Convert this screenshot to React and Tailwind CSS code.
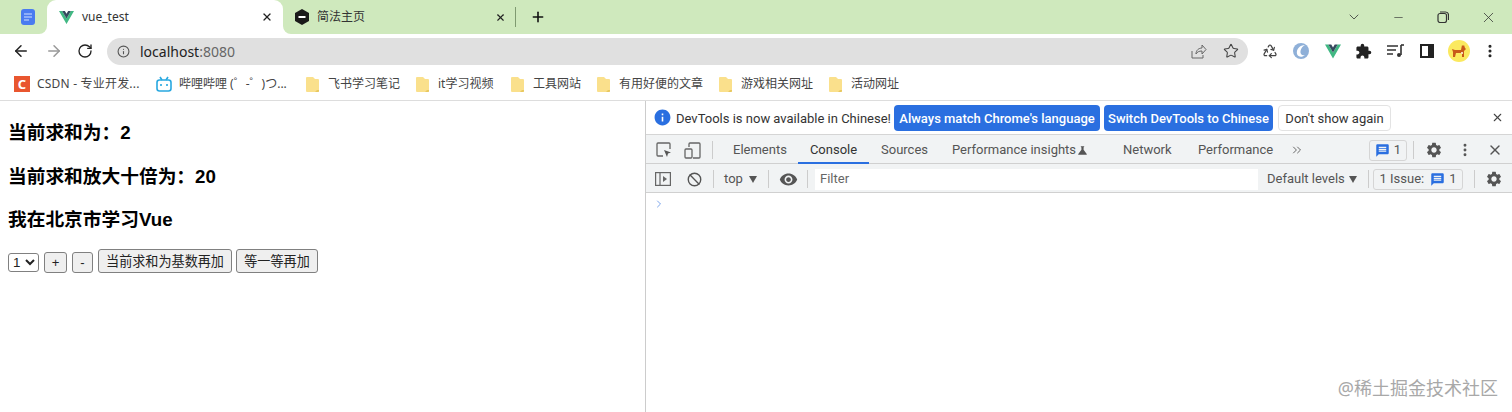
import { ArrowLeft, ArrowRight, RotateCw, Plus, X, Minus, ChevronDown, ChevronRight, ChevronsRight, Star, Recycle, EllipsisVertical, Ban, Info } from "lucide-react";
import { MdExtension, MdSettings, MdMessage, MdRemoveRedEye, MdInfo, MdScience } from "react-icons/md";

const sans = "font-['Noto_Sans','Noto_Sans_CJK_SC',sans-serif]";

function VueLogo({ className }) {
  return (
    <svg viewBox="0 0 24 21" className={className}>
      <path d="M0 0h5l7 12L19 0h5L12 21z" fill="#41b883" />
      <path d="M5 0h4.4L12 4.6 14.6 0H19l-7 12z" fill="#35495e" />
    </svg>
  );
}

function Folder() {
  return (
    <svg viewBox="0 0 13 17" className="w-[13px] h-[17px] shrink-0">
      <path d="M1 1h6l2 2h3a1 1 0 0 1 1 1v11a1 1 0 0 1-1 1H1a1 1 0 0 1-1-1V2a1 1 0 0 1 1-1z" fill="#fae08c" />
      <path d="M9 16l2-2h2v1a1 1 0 0 1-1 1z" fill="#e8c860" />
    </svg>
  );
}

function Mark({ text, width }) {
  return (
    <div className="flex items-center" style={{ width }}>
      <Folder />
      <span className="ml-[9px] text-[12px] text-[#444] whitespace-nowrap">{text}</span>
    </div>
  );
}

function Sep({ className }) {
  return <div className={`w-px h-[18px] bg-[#ccc] shrink-0 ${className}`} />;
}

function Corgi() {
  return (
    <div className="w-[22px] h-[22px] rounded-full bg-[#fbe95f] flex items-center justify-center">
      <svg viewBox="0 0 16 14" className="w-[16px] h-[14px]">
        <path d="M1 5l3 1h6l1-5 1 1 1-1 1 3 1 1-2 2v6h-2V9H5l-1 4H2V8z" fill="#c8591a" />
        <path d="M10 8h2v2h-2z" fill="#f7d9b8" />
      </svg>
    </div>
  );
}

function TabBar() {
  return (
    <div className="h-[34px] bg-[#cfe9bd] flex items-end relative">
      <div className="w-[47px] h-full flex items-center pl-[21px]">
        <svg viewBox="0 0 14 16" className="w-[14px] h-[16px]">
          <rect width="14" height="16" rx="3" fill="#4a7bf0" />
          <path d="M3 5h8M3 8h8M3 11h5" stroke="#cfe0ff" strokeWidth="1.2" />
        </svg>
      </div>
      <div className="w-[236px] h-full bg-white rounded-t-[9px] relative flex items-center pl-[12px]">
        <span className="absolute -left-2 bottom-0 w-2 h-2 bg-white"><span className="block w-2 h-2 bg-[#cfe9bd] rounded-br-lg" /></span>
        <span className="absolute -right-2 bottom-0 w-2 h-2 bg-white"><span className="block w-2 h-2 bg-[#cfe9bd] rounded-bl-lg" /></span>
        <VueLogo className="w-[15px] h-[15px] shrink-0" />
        <span className="ml-[8px] text-[12px] text-[#333]">vue_test</span>
        <X size={12} strokeWidth={2.5} className="ml-auto mr-[10px] text-[#222]" />
      </div>
      <div className="h-full flex items-center">
        <svg viewBox="0 0 14 16" className="ml-[12px] w-[14px] h-[16px] shrink-0">
          <path d="M7 0l7 4v8l-7 4-7-4V4z" fill="#1a1a1a" />
          <path d="M3.5 7h7v2h-7z" fill="#fff" />
        </svg>
        <span className="ml-[8px] w-[178px] text-[12px] text-[#333] whitespace-nowrap">简法主页</span>
        <X size={11} strokeWidth={2.5} className="text-[#222]" />
        <div className="ml-[9px] w-px h-[20px] bg-[#7f9a70]" />
        <Plus size={16} strokeWidth={2.4} className="ml-[14px] text-[#111]" />
      </div>
      <div className="ml-auto h-full flex items-center text-[#333]">
        <ChevronDown size={16} strokeWidth={1.2} />
        <Minus size={13} strokeWidth={1.2} className="ml-[30px]" />
        <svg viewBox="0 0 12 12" className="ml-[32px] w-[12px] h-[12px]" fill="none" stroke="#333" strokeWidth="1.2">
          <rect x="1" y="2.5" width="8.5" height="9" rx="2" />
          <path d="M3 1h5.5a3 3 0 0 1 3 3v5" />
        </svg>
        <X size={17} strokeWidth={1.1} className="ml-[31px] mr-[15px]" />
      </div>
    </div>
  );
}

function AddressBar() {
  return (
    <div className="h-[34px] bg-white flex items-center">
      <ArrowLeft size={18} strokeWidth={2} className="ml-[12px] text-[#222]" />
      <ArrowRight size={18} strokeWidth={2} className="ml-[15px] text-[#999]" />
      <RotateCw size={16} strokeWidth={2} className="ml-[14px] text-[#222]" />
      <div className="ml-[14px] w-[1141px] h-[27px] rounded-full bg-[#e0e0e0] flex items-center pl-[10px] pr-[9px]">
        <Info size={13} strokeWidth={2} className="text-[#555]" />
        <span className="ml-[10px] text-[14px] text-[#222]">localhost<span className="text-[#666]">:8080</span></span>
        <svg viewBox="0 0 16 16" className="ml-auto w-[16px] h-[16px]" fill="none" stroke="#666" strokeWidth="1">
          <path d="M1 8v7h11v-3M5 11c0-4 3-6 6-6V2l4 4.5L11 11V8c-3 0-5 1-6 3z" />
        </svg>
        <Star size={16} strokeWidth={1.6} className="ml-[16px] text-[#444]" />
      </div>
      <Recycle size={16} strokeWidth={1.8} className="ml-[14px] text-[#444]" />
      <svg viewBox="0 0 16 16" className="ml-[15px] w-[16px] h-[16px]">
        <circle cx="8" cy="8" r="8" fill="#8fb0d8" />
        <path d="M12 2C7 2 3 6 4 11c1 3 5 4 8 1-3 1-5-1-4.500-4C8 5 10 3 12 2z" fill="#fff" />
      </svg>
      <VueLogo className="ml-[16px] w-[16px] h-[15px]" />
      <MdExtension size={17} className="ml-[14px] text-[#222]" />
      <svg viewBox="0 0 17 14" className="ml-[15px] w-[17px] h-[14px]" fill="none" stroke="#333" strokeWidth="1.6">
        <path d="M0 2h11M0 6h9M0 10h6" />
        <path d="M14 1v10" />
        <path d="M14 1h3" />
        <circle cx="12" cy="11" r="2" fill="#333" stroke="none" />
      </svg>
      <svg viewBox="0 0 14 14" className="ml-[16px] w-[14px] h-[14px]">
        <path d="M0 0h14v14H0z" fill="#222" />
        <path d="M2 2h6v10H2z" fill="#fff" />
      </svg>
      <div className="ml-[14px]"><Corgi /></div>
      <EllipsisVertical size={16} strokeWidth={2.6} className="ml-[12px] text-[#222]" />
    </div>
  );
}

function Bookmarks() {
  return (
    <div className="h-[32px] bg-white flex items-center pl-[14px] border-b border-[#ddd] box-content">
      <div className="w-[142px] flex items-center">
        <span className="w-[16px] h-[16px] bg-[#e9562f] text-white text-[13px] font-bold leading-[16px] text-center shrink-0">C</span>
        <span className="ml-[7px] text-[12px] text-[#444] tracking-[0.2px] whitespace-nowrap">CSDN - 专业开发...</span>
      </div>
      <div className="w-[150px] flex items-center">
        <svg viewBox="0 0 16 16" className="w-[16px] h-[16px] shrink-0" fill="none" stroke="#28a8e0" strokeWidth="1.6">
          <rect x="1" y="4" width="14" height="11" rx="2.5" />
          <path d="M4 1l2 3M12 1l-2 3M5 8v2M11 8v2" />
        </svg>
        <span className="ml-[7px] text-[12px] text-[#444] whitespace-nowrap">哔哩哔哩 (゜-゜)つ...</span>
      </div>
      <Mark text="飞书学习笔记" width="110px" />
      <Mark text="it学习视频" width="95px" />
      <Mark text="工具网站" width="86px" />
      <Mark text="有用好便的文章" width="122px" />
      <Mark text="游戏相关网址" width="110px" />
      <Mark text="活动网址" width="80px" />
    </div>
  );
}

function PageArea() {
  return (
    <div className="w-[645px] shrink-0 px-[8px] text-black font-['Liberation_Sans','Noto_Sans_CJK_SC',sans-serif]">
      <h3 className="mt-[19px] text-[18.72px] font-bold leading-[25px]">当前求和为：2</h3>
      <h3 className="mt-[19px] text-[18.72px] font-bold leading-[25px]">当前求和放大十倍为：20</h3>
      <h3 className="mt-[18px] text-[18.72px] font-bold leading-[25px]">我在北京市学习Vue</h3>
      <div className="mt-[17px] flex items-end text-[13.1px] leading-[15px] text-[#222]">
        <select className="w-[31px] h-[19px] mb-px border border-[#808080] rounded-[3px] bg-white text-[13.33px]">
          <option>1</option>
        </select>
        <button className="ml-[5px] w-[23px] h-[21px] border border-[#808080] rounded-[3px] bg-[#efefef]">+</button>
        <button className="ml-[5px] w-[21px] h-[21px] border border-[#808080] rounded-[3px] bg-[#efefef]">-</button>
        <button className="ml-[5px] w-[134px] h-[24px] border border-[#808080] rounded-[3px] bg-[#efefef] whitespace-nowrap">当前求和为基数再加</button>
        <button className="ml-[4px] w-[82px] h-[24px] border border-[#808080] rounded-[3px] bg-[#efefef] whitespace-nowrap">等一等再加</button>
      </div>
    </div>
  );
}

function IssueBadge() {
  return (
    <span className="flex items-center">
      <MdMessage size={15} className="text-[#2a6fe0]" />
      <span className="ml-[4px] text-[#555]">1</span>
    </span>
  );
}

function DevTools() {
  return (
    <div className="flex-1 border-l border-[#ccc] relative font-['Roboto','Noto_Sans_CJK_SC',sans-serif]">
      {/* language infobar */}
      <div className="h-[34px] flex items-center pl-[8px] border-b border-[#d5d5d5] text-[13px]">
        <MdInfo size={19} className="text-[#2a6fe0] -ml-px" />
        <span className="ml-[4px] w-[218px] pt-[2px] text-[#333] whitespace-nowrap">DevTools is now available in Chinese!</span>
        <button className="w-[206px] h-[26px] pt-[2px] rounded-[4px] bg-[#2a6fe0] text-white font-medium whitespace-nowrap">Always match Chrome's language</button>
        <button className="ml-[4px] w-[169px] h-[26px] pt-[2px] rounded-[4px] bg-[#2a6fe0] text-white font-medium whitespace-nowrap">Switch DevTools to Chinese</button>
        <button className="ml-[5px] w-[113px] h-[26px] pt-[2px] rounded-[4px] border border-[#e3e3e3] text-[#333] whitespace-nowrap">Don't show again</button>
        <X size={13} strokeWidth={2} className="ml-[100px] text-[#444]" />
      </div>

      {/* panel tabs */}
      <div className="h-[29px] pt-[2px] flex items-center bg-[#f1f3f4] border-b border-[#d0d0d0] text-[13px] text-[#555]">
        <svg viewBox="0 0 16 16" className="ml-[10px] w-[16px] h-[16px]" fill="none" stroke="#666" strokeWidth="1.3">
          <path d="M7 14H2a1 1 0 0 1-1-1V2a1 1 0 0 1 1-1h11a1 1 0 0 1 1 1v5" />
          <path d="M8 8l7 2.500-3 1L11 15z" fill="#555" stroke="none" />
        </svg>
        <svg viewBox="0 0 17 17" className="ml-[12px] w-[17px] h-[17px]" fill="none" stroke="#666" strokeWidth="1.3">
          <path d="M5 5V2a1 1 0 0 1 1-1h9a1 1 0 0 1 1 1v13a1 1 0 0 1-1 1H9" />
          <rect x="1" y="7" width="7" height="9" rx="1" />
        </svg>
        <Sep className="ml-[11px]" />
        <span className="ml-[20px] w-[65px]">Elements</span>
        <span className="relative w-[71px] h-full flex items-center justify-center text-[#333]">
          Console
          <span className="absolute left-0 right-0 -bottom-px h-[2px] bg-[#2a6fe0]" />
        </span>
        <span className="ml-[12px] w-[71px]">Sources</span>
        <span className="w-[124px] whitespace-nowrap">Performance insights</span>
        <MdScience size={13} className="text-[#555]" />
        <span className="ml-[34px] w-[75px]">Network</span>
        <span className="w-[92px]">Performance</span>
        <ChevronsRight size={14} strokeWidth={1.5} className="text-[#555]" />
        <span className="ml-[65px] w-[38px] h-[21px] rounded-[3px] border border-[#d5d5d5] flex items-center justify-center">
          <IssueBadge />
        </span>
        <Sep className="ml-[6px]" />
        <MdSettings size={18} className="ml-[11px] text-[#555]" />
        <EllipsisVertical size={16} strokeWidth={2.4} className="ml-[14px] text-[#555]" />
        <X size={16} strokeWidth={2} className="ml-[14px] text-[#555]" />
      </div>

      {/* console toolbar */}
      <div className="h-[29px] pt-[2px] flex items-center bg-[#f1f3f4] border-b border-[#d0d0d0] text-[13px] text-[#555]">
        <svg viewBox="0 0 16 14" className="ml-[9px] w-[16px] h-[14px]" fill="none" stroke="#666" strokeWidth="1.2">
          <rect x="0.6" y="0.6" width="14.800" height="12.800" />
          <path d="M5 1v12" />
          <path d="M8 4l4 3-4 3z" fill="#666" stroke="none" />
        </svg>
        <Ban size={15} strokeWidth={2.2} className="ml-[16px] text-[#555]" />
        <Sep className="ml-[11px]" />
        <span className="ml-[10px] w-[24px]">top</span>
        <span className="ml-[1px] w-0 h-0 border-x-[4px] border-x-transparent border-t-[7px] border-t-[#555]" />
        <Sep className="ml-[11px]" />
        <MdRemoveRedEye size={19} className="ml-[10px] text-[#555]" />
        <Sep className="ml-[9px]" />
        <div className="ml-[7px] w-[443px] h-[21px] bg-white pl-[5px] flex items-center text-[#666]">Filter</div>
        <span className="ml-[9px] w-[82px] whitespace-nowrap">Default levels</span>
        <span className="w-0 h-0 border-x-[4px] border-x-transparent border-t-[7px] border-t-[#555]" />
        <Sep className="ml-[11px]" />
        <span className="ml-[4px] w-[90px] h-[21px] rounded-[3px] border border-[#d5d5d5] flex items-center justify-center gap-[6px] whitespace-nowrap">
          1 Issue:
          <IssueBadge />
        </span>
        <Sep className="ml-[11px]" />
        <MdSettings size={18} className="ml-[10px] text-[#555]" />
      </div>

      <ChevronRight size={12} strokeWidth={1.6} className="ml-[7px] mt-[5px] text-[#5b8ee6]" />

      {/* site watermark over the screenshot */}
      <span className={`absolute right-[14px] top-[274px] text-[18px] text-[#a8a8a8] whitespace-nowrap ${sans}`}>@稀土掘金技术社区</span>
    </div>
  );
}

export default function App() {
  return (
    <div className={`w-[1512px] h-[412px] overflow-hidden bg-white flex flex-col ${sans}`}>
      <TabBar />
      <AddressBar />
      <Bookmarks />
      <div className="flex-1 flex">
        <PageArea />
        <DevTools />
      </div>
    </div>
  );
}
